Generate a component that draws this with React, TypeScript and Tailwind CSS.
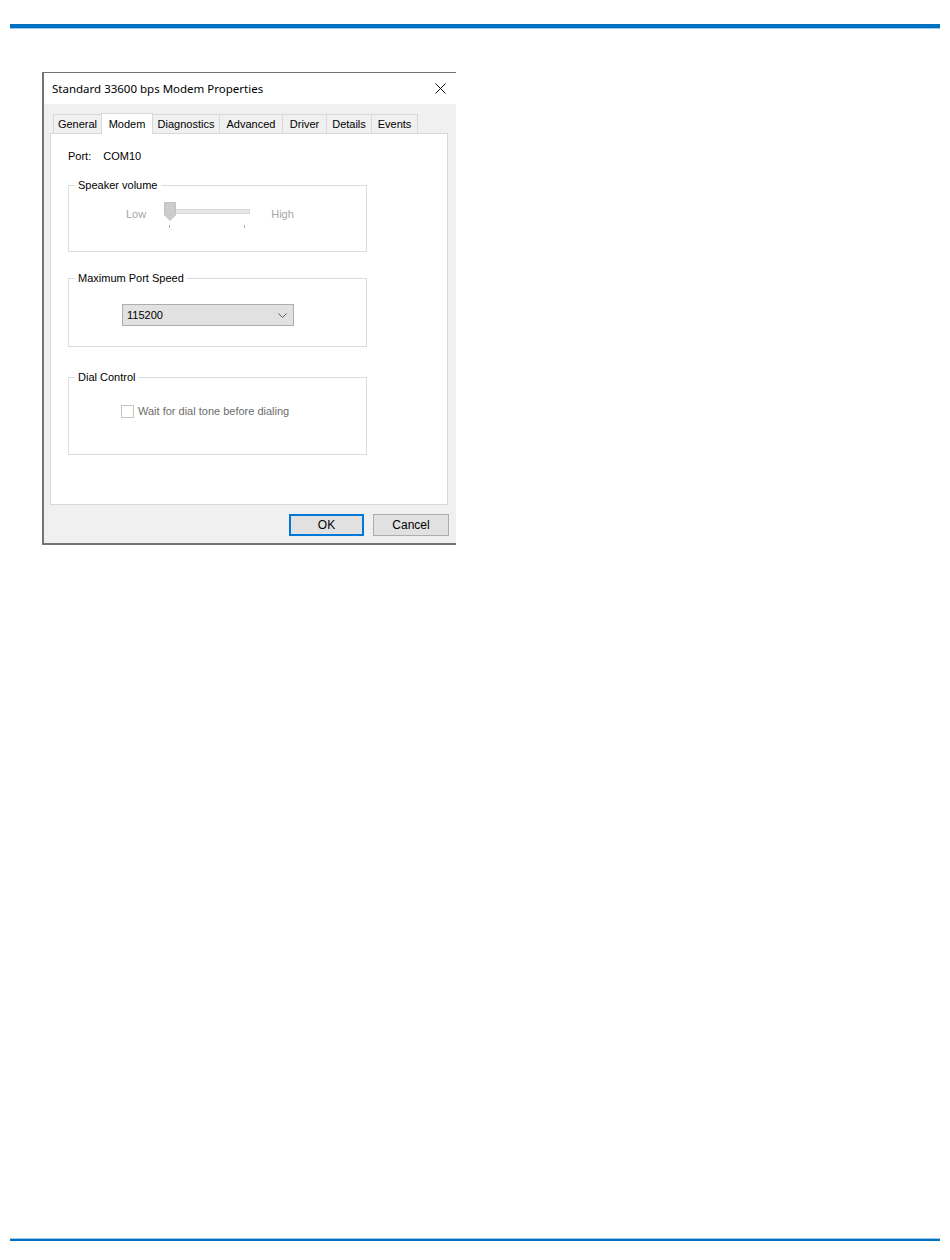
import React from "react";

const tabs = [
    { name: "General", w: 49 },
    { name: "Modem", w: 52 },
    { name: "Diagnostics", w: 68 },
    { name: "Advanced", w: 64 },
    { name: "Driver", w: 45 },
    { name: "Details", w: 46 },
    { name: "Events", w: 47 },
];

const GroupBox = (props: { title: string; className: string; children?: React.ReactNode }) => (
    <fieldset className={`border border-[#dcdcdc] ${props.className}`}>
        <legend className="ml-[6px] px-[3px] text-[11px] leading-[14px] text-black">{props.title}</legend>
        {props.children}
    </fieldset>
);

const Slider = () => (
    <svg width="90" height="26" viewBox="0 0 90 26">
        <rect x="0.5" y="7.5" width="85" height="4" fill="#e7e7e7" stroke="#d6d6d6" />
        <path d="M0.5 0.5 H11.5 V13 L6 18.5 L0.5 13 Z" fill="#cccccc" stroke="#c2c2c2" />
        <rect x="5" y="23" width="1" height="3" fill="#a8a8a8" />
        <rect x="80" y="23" width="1" height="3" fill="#a8a8a8" />
    </svg>
);

export default function App() {
    return (
        <div className="w-[950px] h-[1260px] bg-white flex flex-col font-['Liberation_Sans',Arial,sans-serif] text-[11px]">
            <div className="mt-[24px] mx-[10px]">
                <div className="h-[4px] bg-[#0070c0]" />
                <div className="h-[1px] bg-[#9cc8ea]" />
            </div>

            {/* dialog */}
            <div className="ml-[42px] mt-[43px] w-[414px] border-l-2 border-t border-b-2 border-[#737373] bg-[#f0f0f0]">
                <div className="h-[31px] bg-white flex items-center justify-between pl-[8px] pr-[10px]">
                    <span className="font-['Noto_Sans',sans-serif] text-[11.5px] text-black">Standard 33600 bps Modem Properties</span>
                    <svg width="11" height="11" viewBox="0 0 11 11">
                        <path d="M0.5 0.5 L10.5 10.5 M10.5 0.5 L0.5 10.5" stroke="#111" strokeWidth="1" />
                    </svg>
                </div>

                <div className="pl-[6px] pt-[8px]">
                    {/* tab strip */}
                    <div className="flex items-end h-[21px] pl-[3px]">
                        {tabs.map((t) => (
                            t.name === "Modem" ? (
                                <div key={t.name} style={{ width: t.w }} className="relative z-10 -mb-px -ml-px h-[21px] bg-white border border-b-0 border-[#d9d9d9] flex justify-center pt-[2px] text-black">{t.name}</div>
                            ) : (
                                <div key={t.name} style={{ width: t.w }} className="h-[19px] bg-[#f0f0f0] border border-b-0 border-[#d9d9d9] -ml-px first:ml-0 flex items-center justify-center text-black">{t.name}</div>
                            )
                        ))}
                    </div>

                    {/* panel */}
                    <div className="w-[398px] h-[372px] bg-white border border-[#d9d9d9] pt-[15px] pl-[17px]">
                        <div className="flex gap-[12px] leading-[14px] text-black">
                            <span>Port:</span>
                            <span>COM10</span>
                        </div>

                        <GroupBox title="Speaker volume" className="mt-[15px] w-[299px] h-[74px]">
                            <div className="flex items-start mt-[10px] ml-[57px]">
                                <span className="text-[#a6a6a6] mt-[5px] leading-[14px]">Low</span>
                                <div className="ml-[18px]"><Slider /></div>
                                <span className="text-[#a6a6a6] mt-[5px] ml-[17px] leading-[14px]">High</span>
                            </div>
                        </GroupBox>

                        <GroupBox title="Maximum Port Speed" className="mt-[19px] w-[299px] h-[76px]">
                            <div className="ml-[53px] mt-[19px] w-[172px] h-[22px] bg-[#e1e1e1] border border-[#adadad] flex items-center justify-between pl-[4px] pr-[6px] text-black">
                                <span>115200</span>
                                <svg width="9" height="5" viewBox="0 0 9 5">
                                    <path d="M0.5 0.5 L4.5 4.5 L8.5 0.5" fill="none" stroke="#555" strokeWidth="1" />
                                </svg>
                            </div>
                        </GroupBox>

                        <GroupBox title="Dial Control" className="mt-[23px] w-[299px] h-[85px]">
                            <div className="ml-[52px] mt-[19px] flex items-center gap-[4px]">
                                <div className="w-[13px] h-[13px] bg-white border border-[#c4c4c4]" />
                                <span className="text-[#6d6d6d]">Wait for dial tone before dialing</span>
                            </div>
                        </GroupBox>
                    </div>

                    {/* buttons */}
                    <div className="flex justify-end gap-[9px] pr-[7px] mt-[9px] pb-[7px]">
                        <button className="w-[75px] h-[22px] bg-[#e1e1e1] border-2 border-[#0078d7] text-black text-[12px]">OK</button>
                        <button className="w-[76px] h-[22px] bg-[#e1e1e1] border border-[#adadad] text-black text-[12px]">Cancel</button>
                    </div>
                </div>
            </div>

            <div className="mt-auto mb-[19px] mx-[10px]">
                <div className="h-[1px] bg-[#9cc8ea]" />
                <div className="h-[2px] bg-[#0070c0]" />
            </div>
        </div>
    );
}
